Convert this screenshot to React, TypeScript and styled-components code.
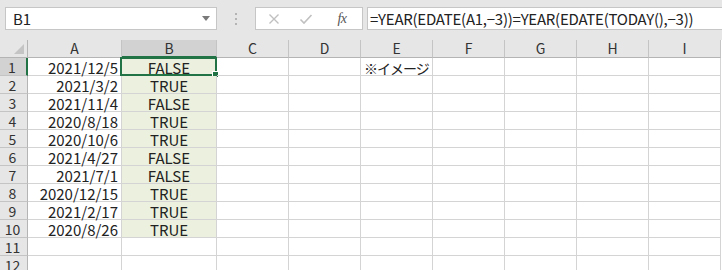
import React, { FunctionComponent } from "react";
import styled, { createGlobalStyle, css } from "styled-components";

const GlobalStyle = createGlobalStyle`
  body {
    margin: 0;
    background: #ffffff;
    font-family: "Noto Sans CJK JP", "Liberation Sans", sans-serif;
    overflow: hidden;
  }
`;

const GRID = "#d4d4d4";
const GREEN = "#217346";

const Page = styled.div`
  width: 722px;
  height: 270px;
  overflow: hidden;
  background: #ffffff;
`;

const Toolbar = styled.div`
  display: flex;
  align-items: flex-start;
  height: 40px;
  padding: 7px 0 0 5px;
  box-sizing: border-box;
  background: #e6e6e6;
`;

const NameBox = styled.div`
  display: flex;
  align-items: center;
  justify-content: space-between;
  width: 212px;
  height: 23px;
  box-sizing: border-box;
  padding: 0 6px 0 7px;
  background: #ffffff;
  border: 1px solid #c6c6c6;
  font-size: 15px;
  color: #222;
`;

const DropArrow = styled.span`
  width: 0;
  height: 0;
  border-left: 4px solid transparent;
  border-right: 4px solid transparent;
  border-top: 5px solid #7a7a7a;
`;

const Grip = styled.div`
  display: flex;
  flex-direction: column;
  justify-content: center;
  gap: 3px;
  width: 38px;
  height: 23px;
  align-items: center;
`;

const GripDot = styled.span`
  width: 2px;
  height: 2px;
  background: #b4b4b4;
`;

const FuncBox = styled.div`
  display: flex;
  align-items: center;
  width: 108px;
  height: 23px;
  box-sizing: border-box;
  background: #ffffff;
  border: 1px solid #c6c6c6;
  padding-left: 11px;
`;

const FuncIcon = styled.span<{ $w: number }>`
  display: flex;
  align-items: center;
  justify-content: center;
  width: ${(p) => p.$w}px;
`;

const Fx = styled.span`
  font-family: "Liberation Serif", serif;
  font-style: italic;
  font-size: 14px;
  color: #555;
  letter-spacing: -0.5px;
`;

const FormulaBox = styled.div`
  flex: 1;
  height: 23px;
  margin-left: 4px;
  box-sizing: border-box;
  background: #ffffff;
  border: 1px solid #c6c6c6;
  border-right: none;
  padding-left: 2px;
  font-size: 15px;
  line-height: 22px;
  color: #222;
  white-space: nowrap;
  letter-spacing: -0.25px;
`;

const Sheet = styled.div`
  display: grid;
  grid-template-columns: 28px 94px 95px repeat(7, 72px);
  grid-auto-rows: 18px;
`;

const Cell = styled.div<{ $align?: "left" | "right" | "center"; $fill?: boolean }>`
  position: relative;
  box-sizing: border-box;
  border-right: 1px solid ${GRID};
  border-bottom: 1px solid ${GRID};
  font-size: 15px;
  line-height: 17px;
  padding: 1px 3px 0;
  color: #222;
  white-space: nowrap;
  text-align: ${(p) => p.$align || "left"};
  background: ${(p) => (p.$fill ? "#ebf1de" : "transparent")};
`;

const Note = styled.span`
  font-size: 14px;
  letter-spacing: -1px;
`;

const HeadCell = styled.div<{ $active?: boolean }>`
  box-sizing: border-box;
  background: ${(p) => (p.$active ? "#d2d2d2" : "#e6e6e6")};
  border-right: 1px solid #c4c4c4;
  border-bottom: 1px solid #b4b4b4;
  font-size: 14px;
  line-height: 17px;
  text-align: center;
  color: #333;
  ${(p) =>
    p.$active &&
    css`
      border-bottom: 2px solid ${GREEN};
    `}
`;

const RowHead = styled.div<{ $active?: boolean }>`
  box-sizing: border-box;
  background: ${(p) => (p.$active ? "#d2d2d2" : "#e6e6e6")};
  border-right: 1px solid #b4b4b4;
  border-bottom: 1px solid #c4c4c4;
  font-size: 14px;
  line-height: 17px;
  padding: 1px 2px 0 0;
  text-align: center;
  color: #333;
  ${(p) =>
    p.$active &&
    css`
      border-right: 2px solid ${GREEN};
    `}
`;

const Corner = styled.div`
  box-sizing: border-box;
  background: #e6e6e6;
  border-right: 1px solid #b4b4b4;
  border-bottom: 1px solid #b4b4b4;
  display: flex;
  align-items: flex-end;
  justify-content: flex-end;
  padding: 0 3px 3px 0;
`;

const CornerMark = styled.span`
  width: 0;
  height: 0;
  border-left: 10px solid transparent;
  border-bottom: 10px solid #c4c4c4;
`;

const Selection = styled.div`
  position: absolute;
  left: -2px;
  top: -1px;
  right: -1px;
  bottom: -1px;
  border: 2px solid ${GREEN};
  pointer-events: none;
`;

const Handle = styled.span`
  position: absolute;
  right: -4px;
  bottom: -4px;
  width: 5px;
  height: 5px;
  background: ${GREEN};
  border: 1px solid #ffffff;
`;

const columns = ["A", "B", "C", "D", "E", "F", "G", "H", "I"];

const data: [string, string][] = [
  ["2021/12/5", "FALSE"],
  ["2021/3/2", "TRUE"],
  ["2021/11/4", "FALSE"],
  ["2020/8/18", "TRUE"],
  ["2020/10/6", "TRUE"],
  ["2021/4/27", "FALSE"],
  ["2021/7/1", "FALSE"],
  ["2020/12/15", "TRUE"],
  ["2021/2/17", "TRUE"],
  ["2020/8/26", "TRUE"],
  ["", ""],
  ["", ""],
];

const App: FunctionComponent = () => (
  <Page>
    <GlobalStyle />
    <Toolbar>
      <NameBox>
        <span>B1</span>
        <DropArrow />
      </NameBox>
      <Grip>
        <GripDot />
        <GripDot />
        <GripDot />
      </Grip>
      <FuncBox>
        <FuncIcon $w={14}>
          <svg width="12" height="12" viewBox="0 0 12 12">
            <path d="M1.5 1.5 L10.5 10.5 M10.5 1.5 L1.5 10.5" stroke="#c0c0c0" strokeWidth="1.4" />
          </svg>
        </FuncIcon>
        <FuncIcon $w={50}>
          <svg width="14" height="12" viewBox="0 0 14 12">
            <path d="M1.5 6.5 L5 10 L12.5 2" stroke="#c0c0c0" strokeWidth="1.6" fill="none" />
          </svg>
        </FuncIcon>
        <FuncIcon $w={22}>
          <Fx>fx</Fx>
        </FuncIcon>
      </FuncBox>
      <FormulaBox>=YEAR(EDATE(A1,−3))=YEAR(EDATE(TODAY(),−3))</FormulaBox>
    </Toolbar>
    <Sheet>
      <Corner>
        <CornerMark />
      </Corner>
      {columns.map((c) => (
        <HeadCell key={c} $active={c === "B"}>
          {c}
        </HeadCell>
      ))}
      {data.map(([a, b], i) => (
        <React.Fragment key={i}>
          <RowHead $active={i === 0}>{i + 1}</RowHead>
          <Cell $align="right">{a}</Cell>
          <Cell $align="center" $fill={i < 10}>
            {b}
            {i === 0 && (
              <Selection>
                <Handle />
              </Selection>
            )}
          </Cell>
          <Cell />
          <Cell />
          <Cell>{i === 0 && <Note>※イメージ</Note>}</Cell>
          <Cell />
          <Cell />
          <Cell />
          <Cell />
        </React.Fragment>
      ))}
    </Sheet>
  </Page>
);

export default App;
